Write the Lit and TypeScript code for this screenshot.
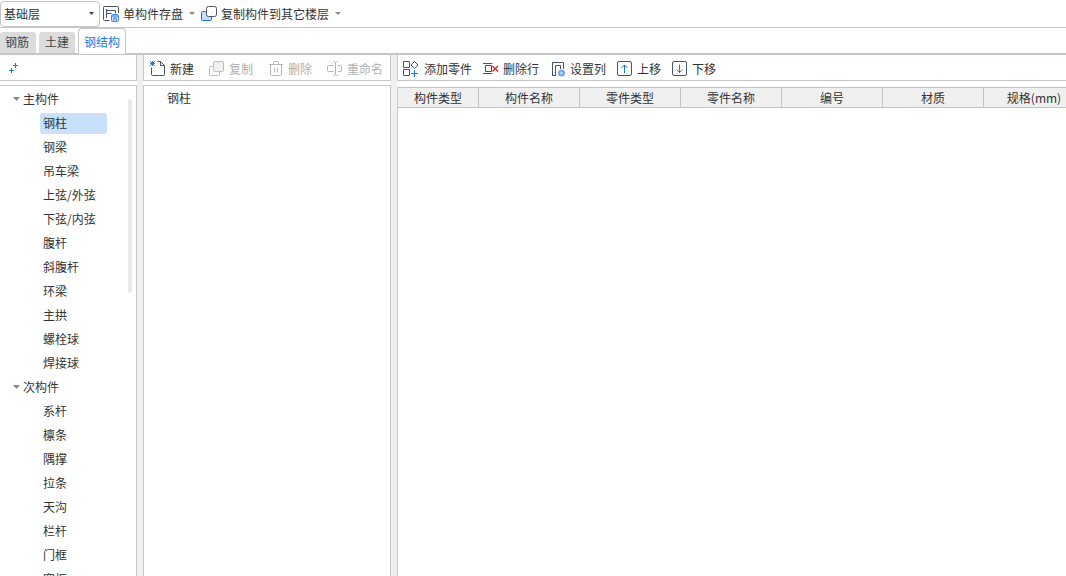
import { LitElement, html, css, svg, nothing } from "lit";
import { customElement, property, state } from "lit/decorators.js";
import { classMap } from "lit/directives/class-map.js";

const icons: Record<string, unknown> = {
  save: svg`<g fill="none" stroke="#4a5568"><path d="M15.5 7V1.500a1 1 0 0 0-1-1h-13a1 1 0 0 0-1 1v12a1 1 0 0 0 1 1h5"/><path d="M3.500 3v9M3.500 4.500h9v3M3.500 7.500h5"/></g><rect x="8.500" y="8.500" width="7" height="7" rx="1" fill="#d5e8fc" stroke="#3f8cec"/><path d="M9 9h6v2l-3 2-3-2z" fill="#7db1f5"/><path d="M10.500 15v-2h3v2" fill="none" stroke="#3f8cec"/>`,
  copyFloor: svg`<path d="M4.500 5.500h-3a1 1 0 0 0-1 1v7a1 1 0 0 0 1 1h8a1 1 0 0 0 1-1v-3" fill="#c8dcfa" stroke="#1b6fe0"/><rect x="5.500" y=".5" width="10" height="10" rx="2" fill="#fff" stroke="#4a5568"/>`,
  add: svg`<path d="M7.500.5h3l4 4v9a1 1 0 0 1-1 1h-11a1 1 0 0 1-1-1V6.500" fill="none" stroke="#4a5568"/><path d="M10.500.5v4h4" fill="none" stroke="#4a5568"/><path d="M0 0h1v1h1V0h1v1h1V0h1v1H4v1h1v1H4v1h1v1H4V4H3v1H2V4H1v1H0V4h1V3H0V2h1V1H0z" fill="#1b78e8"/>`,
  copy: svg`<path d="M4 5.500H1.500a1 1 0 0 0-1 1v7a1 1 0 0 0 1 1h8a1 1 0 0 0 1-1V11" fill="none" stroke="#bdbdbd"/><rect x="4.500" y=".5" width="10" height="10" rx="1" fill="#f0f0f0" stroke="#bdbdbd"/>`,
  trash: svg`<g fill="none" stroke="#b5b5b5"><path d="M1 3.500h14M5.500 3V1.500a1 1 0 0 1 1-1h3a1 1 0 0 1 1 1V3M2.500 4v9.500a1 1 0 0 0 1 1h9a1 1 0 0 0 1-1V4M6.500 6.500v5M9.500 6.500v5"/></g>`,
  rename: svg`<g fill="none" stroke="#b5b5b5"><path d="M6.500 4.500h-5a1 1 0 0 0-1 1v4a1 1 0 0 0 1 1h5M11 4.500h2.500a1 1 0 0 1 1 1v4a1 1 0 0 1-1 1H11M6.500.5h1l1 1 1-1h1M8.500 1v13M6.500 14.500h1l1-1 1 1h1"/></g>`,
  addPart: svg`<g fill="none" stroke="#4a5568"><path d="M.5.500h6v6h-6zM.5 8.500h6v6h-6z"/><path d="M11.500.5 15 4l-3.500 3.500L8 4z"/></g><path d="M11.500 9v7M8 12.500h7" stroke="#1b78e8"/>`,
  delRow: svg`<g fill="none" stroke="#4a5568"><path d="M1 2.500h9.500M1 12.500h9.500M3.500 4.500h6v6h-6z"/></g><path d="M10.500 5l5.500 5.500M16 5l-5.500 5.500" stroke="#e02020" stroke-width="1.300"/>`,
  columns: svg`<path d="M3.500 15V1.500h11V8M6.500 15V4.500h5V8M3 14.500h4" fill="none" stroke="#4a5568"/><circle cx="12.500" cy="12" r="3.500" fill="#6ea9f2"/><circle cx="12.500" cy="12" r="1.200" fill="#d5e8fc"/>`,
  up: svg`<rect x="1.500" y=".5" width="14" height="14" rx="1.500" fill="none" stroke="#4a5568"/><path d="M8.500 12V4M5.500 7l3-3 3 3" fill="none" stroke="#1b78e8"/>`,
  down: svg`<rect x="1.500" y=".5" width="14" height="14" rx="1.500" fill="none" stroke="#4a5568"/><path d="M8.500 3.500v8M5.500 8.500l3 3 3-3" fill="none" stroke="#1b78e8"/>`,
  expand: svg`<path d="M10.500 2v5M8 4.500h5M6.500 7v5M4 9.500h5" stroke="#1b78e8"/>`,
};

const base = css`
  * {
    box-sizing: border-box;
  }
  button {
    font: inherit;
    color: inherit;
    background: none;
    border: 0;
    padding: 0;
    margin: 0;
    white-space: nowrap;
  }
`;

@customElement("tool-button")
class ToolButton extends LitElement {
  static styles = [
    base,
    css`
      :host {
        display: block;
        flex: none;
      }
      .tool {
        display: flex;
        align-items: center;
        gap: var(--tool-gap, 4px);
        color: #333;
      }
      .tool:disabled {
        color: #b0b0b0;
      }
      .icon {
        width: 16px;
        height: 16px;
        flex: none;
        overflow: visible;
      }
      .caret {
        width: 6px;
        height: 3px;
        margin-left: 2px;
      }
    `,
  ];
  @property() icon = "";
  @property() label = "";
  @property({ type: Boolean }) disabled = false;
  @property({ type: Boolean }) menu = false;

  render() {
    return html`<button class="tool" type="button" ?disabled=${this.disabled}>
      <svg class="icon" viewBox="0 0 16 16" aria-hidden="true">${icons[this.icon]}</svg>
      <span>${this.label}</span>
      ${this.menu
        ? html`<svg class="caret" viewBox="0 0 6 3" aria-hidden="true"><path d="M0 0h6L3 3z" fill="#888" /></svg>`
        : nothing}
    </button>`;
  }
}

const groups = [
  {
    name: "主构件",
    items: ["钢柱", "钢梁", "吊车梁", "上弦/外弦", "下弦/内弦", "腹杆", "斜腹杆", "环梁", "主拱", "螺栓球", "焊接球"],
  },
  {
    name: "次构件",
    items: ["系杆", "檩条", "隅撑", "拉条", "天沟", "栏杆", "门框", "窗框"],
  },
];
const tabs = ["钢筋", "土建", "钢结构"];
const columns = ["构件类型", "构件名称", "零件类型", "零件名称", "编号", "材质", "规格(mm)"];

@customElement("app-root")
class AppRoot extends LitElement {
  static styles = [
    base,
    css`
      :host {
        display: flex;
        flex-direction: column;
        height: 100vh;
        overflow: hidden;
        background: #fff;
        color: #333;
        font: 12px/18px "Noto Sans CJK SC", sans-serif;
      }
      .topbar {
        display: flex;
        align-items: center;
        gap: 6px;
        height: 28px;
        flex: none;
        border-bottom: 1px solid #c6c8cc;
      }
      .floor {
        display: grid;
        align-items: center;
        width: 100px;
        height: 26px;
        margin-right: -3px;
      }
      .floor-select {
        grid-area: 1 / 1;
        appearance: none;
        width: 100%;
        height: 100%;
        padding: 0 20px 0 3px;
        border: 1px solid #c3c5ca;
        border-radius: 4px;
        background: #fff;
        color: inherit;
        font: inherit;
      }
      .floor-caret {
        grid-area: 1 / 1;
        justify-self: end;
        width: 5px;
        height: 3px;
        margin-right: 6px;
        pointer-events: none;
      }
      .tabs {
        display: flex;
        align-items: flex-end;
        gap: 3px;
        height: 25px;
        flex: none;
        z-index: 1;
      }
      .tab {
        height: 21px;
        padding: 0 6px 2px;
        border-radius: 3px 3px 0 0;
        background: #dcdcdc;
        color: #444;
      }
      .tab:first-child {
        padding-left: 5px;
        padding-right: 7px;
      }
      .tab.active {
        height: 26px;
        margin-bottom: -1px;
        padding: 0 5px;
        border: 1px solid #c3c5ca;
        border-bottom: 0;
        border-radius: 4px 4px 0 0;
        background: #fff;
        color: #1b78e8;
      }
      .workspace {
        flex: 1;
        min-height: 0;
        display: grid;
        grid-template-columns: 137px 6px 248px 6px minmax(0, 1fr);
        border-top: 2px solid #c3c6cc;
      }
      .splitter {
        background: #f0f0f0;
      }
      .pane {
        display: flex;
        flex-direction: column;
        min-width: 0;
        min-height: 0;
      }
      .toolbar {
        display: flex;
        align-items: center;
        flex: none;
        height: 26px;
        padding-top: 3px;
        border: 1px solid #c6c8cc;
        border-top: 0;
      }
      .left .toolbar,
      .left .body {
        border-left: 0;
      }
      .left .toolbar {
        padding-left: 5px;
      }
      .expand {
        display: flex;
      }
      .expand-icon {
        width: 16px;
        height: 16px;
      }
      .middle .toolbar {
        gap: 15px;
        padding-left: 6px;
      }
      .right .toolbar {
        --tool-gap: 5px;
        gap: 10px;
        padding-left: 5px;
        border-right: 0;
      }
      .body {
        flex: 1;
        min-height: 0;
        margin-top: 4px;
        border: 1px solid #c6c8cc;
        border-bottom: 0;
        position: relative;
        overflow: hidden;
      }
      .tree {
        padding-top: 1px;
      }
      .thumb {
        position: absolute;
        top: 13px;
        right: 4px;
        width: 4px;
        height: 194px;
        border-radius: 2px;
        background: #ebebeb;
      }
      .list {
        list-style: none;
        margin: 0;
        padding: 0;
      }
      .group {
        display: flex;
        align-items: center;
        gap: 3px;
        height: 24px;
        padding-left: 13px;
      }
      .group-caret {
        width: 7px;
        height: 4px;
      }
      .row {
        display: flex;
        align-items: center;
        height: 24px;
        padding-left: 40px;
      }
      .item {
        width: 67px;
        height: 21px;
        padding: 0 3px;
        border-radius: 3px;
        text-align: left;
      }
      .item.selected {
        background: #c9e0fa;
      }
      .component {
        height: 24px;
        padding-left: 23px;
      }
      .grid {
        flex: 1;
        margin-top: 6px;
        overflow: hidden;
        border-left: 1px solid #c6c8cc;
      }
      .table {
        table-layout: fixed;
        width: 788px;
        min-width: 100%;
        border-collapse: separate;
        border-spacing: 0;
      }
      .col {
        width: 101px;
      }
      .col-first {
        width: 81px;
      }
      .head {
        height: 21px;
        padding: 0;
        border: solid #c3c3c3;
        border-width: 1px 1px 1px 0;
        background: #f0f0f0;
        font-weight: 400;
        line-height: 19px;
        white-space: nowrap;
      }
      .head.filler {
        border-right: 0;
      }
    `,
  ];

  @state() private tab = "钢结构";
  @state() private selected = "钢柱";

  private renderGroup(g: { name: string; items: string[] }) {
    return html`<li>
      <button class="group" type="button" aria-expanded="true">
        <svg class="group-caret" viewBox="0 0 7 4" aria-hidden="true"><path d="M0 0h7L3.500 4z" fill="#888" /></svg>
        <span>${g.name}</span>
      </button>
      <ul class="list">
        ${g.items.map(
          (name) => html`<li class="row">
            <button
              type="button"
              class=${classMap({ item: true, selected: name === this.selected })}
              @click=${() => (this.selected = name)}
            >${name}</button>
          </li>`
        )}
      </ul>
    </li>`;
  }

  render() {
    return html`
      <header class="topbar">
        <div class="floor">
          <select class="floor-select" aria-label="楼层">
            <option>基础层</option>
          </select>
          <svg class="floor-caret" viewBox="0 0 5 3" aria-hidden="true"><path d="M0 0h5L2.500 3z" fill="#444" /></svg>
        </div>
        <tool-button icon="save" label="单构件存盘" menu></tool-button>
        <tool-button icon="copyFloor" label="复制构件到其它楼层" menu></tool-button>
      </header>
      <nav class="tabs" role="tablist">
        ${tabs.map(
          (t) => html`<button
            type="button"
            role="tab"
            aria-selected=${t === this.tab}
            class=${classMap({ tab: true, active: t === this.tab })}
            @click=${() => (this.tab = t)}
          >${t}</button>`
        )}
      </nav>
      <main class="workspace">
        <section class="pane left">
          <div class="toolbar">
            <button class="expand" type="button" aria-label="展开">
              <svg class="expand-icon" viewBox="0 0 16 16" aria-hidden="true">${icons.expand}</svg>
            </button>
          </div>
          <div class="body tree">
            <ul class="list">${groups.map((g) => this.renderGroup(g))}</ul>
            <div class="thumb"></div>
          </div>
        </section>
        <div class="splitter"></div>
        <section class="pane middle">
          <div class="toolbar">
            <tool-button icon="add" label="新建"></tool-button>
            <tool-button icon="copy" label="复制" disabled></tool-button>
            <tool-button icon="trash" label="删除" disabled></tool-button>
            <tool-button icon="rename" label="重命名" disabled></tool-button>
          </div>
          <div class="body">
            <button class="component" type="button">钢柱</button>
          </div>
        </section>
        <div class="splitter"></div>
        <section class="pane right">
          <div class="toolbar">
            <tool-button icon="addPart" label="添加零件"></tool-button>
            <tool-button icon="delRow" label="删除行"></tool-button>
            <tool-button icon="columns" label="设置列"></tool-button>
            <tool-button icon="up" label="上移"></tool-button>
            <tool-button icon="down" label="下移"></tool-button>
          </div>
          <div class="grid">
            <table class="table">
              <colgroup>
                ${columns.map((_, i) => html`<col class=${i ? "col" : "col-first"} />`)}
                <col />
              </colgroup>
              <thead>
                <tr>
                  ${columns.map((c) => html`<th class="head" scope="col">${c}</th>`)}
                  <td class="head filler"></td>
                </tr>
              </thead>
            </table>
          </div>
        </section>
      </main>
    `;
  }
}
